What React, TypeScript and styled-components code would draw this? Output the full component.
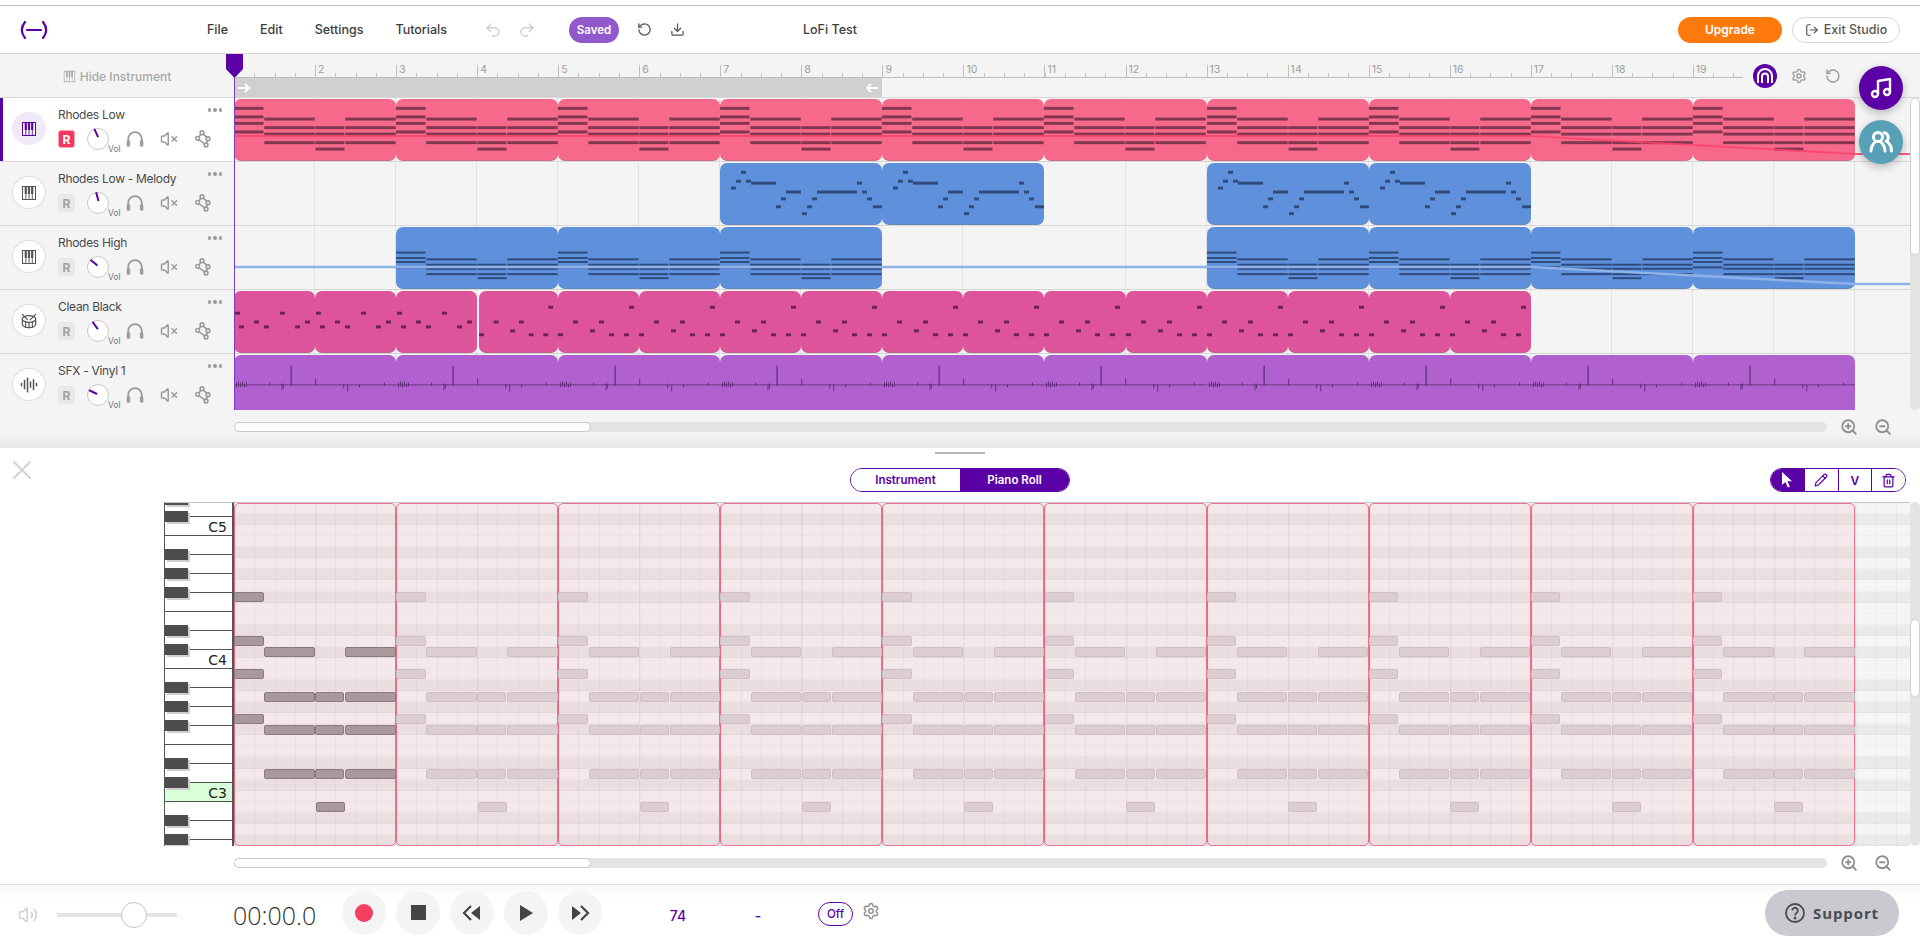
import React from 'react'
import styled, {createGlobalStyle} from 'styled-components'
import {
  AudioLines,
  Download,
  Drum,
  LogOut,
  Music,
  Pencil,
  Redo2,
  RotateCcw,
  Settings,
  Trash2,
  Undo2,
  Volume2,
  VolumeX,
  X,
  ZoomIn,
  ZoomOut,
} from 'lucide-react'

const PURPLE = '#5a00a6'
const BAR = 162.1
const UI_FONT = `Inter, "Noto Sans", sans-serif`

const GlobalStyle = createGlobalStyle`
  html, body {
    margin: 0;
    height: 100%;
    background: #fff;
    overflow: hidden;
  }
  body {
    font-family: ${UI_FONT};
    color: #444;
  }
`

const Page = styled.div`
  width: 1920px;
  height: 940px;
  padding-top: 5px;
  box-sizing: border-box;
  display: flex;
  flex-direction: column;
  overflow: hidden;
`

/* header */
const Header = styled.header`
  flex: none;
  height: 49px;
  box-sizing: border-box;
  border-top: 1px solid #bdbdbd;
  border-bottom: 1px solid #d8d8d8;
  display: flex;
  align-items: center;
  padding: 0 20px;
`

const Logo = styled.svg`
  flex: none;
  width: 28px;
  height: 20px;
  margin-right: 159px;
`

const Menu = styled.nav`
  display: flex;
  gap: 32px;
  font-size: 12.5px;
  font-weight: 500;
  color: #3c3c3c;
`

const HeaderIcons = styled.div`
  display: flex;
  gap: 16px;
  margin-left: 37px;
  color: #cfcfcf;
`

const SavedPill = styled.div`
  width: 50px;
  height: 26px;
  margin-left: 33px;
  border-radius: 13px;
  background: #9058cb;
  color: #fff;
  font-size: 11.5px;
  font-weight: 600;
  display: flex;
  align-items: center;
  justify-content: center;
`

const HeaderActions = styled.div`
  display: flex;
  gap: 18px;
  margin-left: 18px;
  color: #555;
`

const SongTitle = styled.div`
  margin-left: 118px;
  font-size: 12.5px;
  font-weight: 500;
  color: #3c3c3c;
`

const UpgradeButton = styled.div`
  margin-left: auto;
  width: 104px;
  height: 26px;
  border-radius: 13px;
  background: #ff7a0c;
  color: #fff;
  font-size: 12px;
  font-weight: 600;
  display: flex;
  align-items: center;
  justify-content: center;
`

const ExitButton = styled.div`
  width: 108px;
  height: 26px;
  margin-left: 10px;
  box-sizing: border-box;
  border-radius: 13px;
  border: 1px solid #d8d8d8;
  color: #555;
  font-size: 12.5px;
  font-weight: 500;
  display: flex;
  align-items: center;
  justify-content: center;
  gap: 5px;
`

/* arrangement */
const Arrangement = styled.section`
  position: relative;
  flex: none;
  height: 394px;
  background: linear-gradient(to bottom, #f4f4f4 calc(100% - 16px), #e9e9e9 100%);
`

const TimelineRow = styled.div`
  height: 44px;
  box-sizing: border-box;
  border-bottom: 1px solid #d8d8d8;
  display: flex;
`

const HideInstrument = styled.div`
  flex: none;
  width: 234px;
  display: flex;
  align-items: center;
  justify-content: center;
  gap: 4px;
  padding-top: 2px;
  box-sizing: border-box;
  color: #a8a8a8;
  font-size: 12px;
  font-weight: 500;
`

const TimelineColumn = styled.div`
  flex: none;
  width: 1509px;
`

const Ruler = styled.div`
  height: 24px;
  box-sizing: border-box;
  display: flex;
  overflow: hidden;
  align-items: flex-end;
  border-bottom: 1px solid #bcbcbc;
  background: repeating-linear-gradient(
      to right,
      #c4c4c4 0 1px,
      transparent 1px ${BAR / 8}px
    )
    left bottom / 100% 4px no-repeat;
`

const RulerCell = styled.div`
  flex: none;
  width: ${BAR / 2}px;
  height: 12px;
  box-sizing: border-box;
  border-left: 1px solid #c0c0c0;
  padding-left: 2px;
  font-size: 10.5px;
  line-height: 10px;
  color: #9c9c9c;
`

const LoopBar = styled.div`
  width: ${BAR * 4}px;
  height: 19px;
  background: #d0d0d0;
  color: #fff;
  display: flex;
  align-items: center;
  justify-content: space-between;
  padding: 0 3px;
  box-sizing: border-box;
`

const TimelineTools = styled.div`
  display: flex;
  align-items: center;
  gap: 10px;
  margin-left: 10px;
  color: #9a9a9a;
`

const ArchBadge = styled.div`
  width: 24px;
  height: 24px;
  border-radius: 50%;
  background: ${PURPLE};
  display: flex;
  align-items: center;
  justify-content: center;
`

const ToolSlot = styled.div`
  width: 24px;
  display: flex;
  justify-content: center;
`

const TrackViewport = styled.div`
  display: flex;
  height: 312px;
`

const TrackList = styled.div`
  flex: none;
  width: 1910px;
  overflow: hidden;
`

const VScrollTrack = styled.div`
  flex: none;
  width: 10px;
  background: #e4e4e4;
  border-radius: 5px;
  box-sizing: border-box;
`

const VScrollThumb = styled.div<{$height: number; $top: number}>`
  height: ${(p) => p.$height}px;
  margin-top: ${(p) => p.$top}px;
  box-sizing: border-box;
  background: #fff;
  border: 1px solid #cfcfcf;
  border-radius: 5px;
`

const TrackRow = styled.div`
  display: flex;
  height: 64px;
  box-sizing: border-box;
  border-bottom: 1px solid #d8d8d8;
`

const TrackHead = styled.div<{$active: boolean}>`
  flex: none;
  width: 234px;
  box-sizing: border-box;
  display: flex;
  padding: 0 11px 0 12px;
  background: ${(p) => (p.$active ? '#fff' : '#f4f4f4')};
  box-shadow: ${(p) => (p.$active ? `inset 3px 0 0 ${PURPLE}` : 'none')};
`

const InstrumentBadge = styled.div<{$active: boolean}>`
  flex: none;
  width: 34px;
  height: 33px;
  margin-top: 14px;
  box-sizing: border-box;
  border-radius: 50%;
  display: flex;
  align-items: center;
  justify-content: center;
  background: ${(p) => (p.$active ? '#f0e9f8' : '#fff')};
  border: 1px solid ${(p) => (p.$active ? '#f0e9f8' : '#dcdcdc')};
  color: ${(p) => (p.$active ? PURPLE : '#555')};
`

const TrackInfo = styled.div`
  flex: 1;
  min-width: 0;
  margin-left: 12px;
  padding-top: 10px;
`

const NameLine = styled.div`
  display: flex;
  justify-content: space-between;
  height: 14px;
`

const TrackName = styled.div`
  font-size: 12px;
  line-height: 14px;
  color: #4a4a4a;
  letter-spacing: -0.3px;
`

const MoreDots = styled.div`
  display: flex;
  gap: 2px;
  margin: 0 1px 0 0;
`

const Dot = styled.span`
  width: 3.5px;
  height: 3.5px;
  border-radius: 50%;
  background: #9e9e9e;
`

const Controls = styled.div`
  display: flex;
  align-items: center;
  margin-top: 8px;
  height: 18px;
  color: #9b9b9b;
`

const RecButton = styled.div<{$active: boolean}>`
  flex: none;
  width: 17px;
  height: 18px;
  box-sizing: border-box;
  border-radius: 3px;
  font-size: 12px;
  font-weight: 700;
  display: flex;
  align-items: center;
  justify-content: center;
  background: ${(p) => (p.$active ? '#f2375f' : '#e8e8e8')};
  border: ${(p) => (p.$active ? '1.5px solid #f9a5b7' : 'none')};
  color: ${(p) => (p.$active ? '#fff' : '#a3a3a3')};
`

const Knob = styled.div`
  position: relative;
  flex: none;
  width: 22px;
  height: 22px;
  margin: 0 17px 0 12px;
  box-sizing: border-box;
  border-radius: 50%;
  background: #fff;
  border: 1px solid #c9c9c9;
`

const KnobTick = styled.span`
  position: absolute;
  left: 9.5px;
  top: -1px;
  width: 1.6px;
  height: 9px;
  background: ${PURPLE};
  transform-origin: 50% 11px;
`

const VolLabel = styled.span`
  position: absolute;
  left: 20px;
  top: 15px;
  font-size: 8.5px;
  color: #777;
`

const CtrlIcon = styled.div`
  flex: none;
  width: 18px;
  margin-right: 16px;
  display: flex;
  justify-content: center;
  &:last-child {
    margin-right: 0;
  }
`

const Lane = styled.div`
  position: relative;
  flex: none;
  width: 1676px;
  display: grid;
  grid-template-columns: repeat(20, ${BAR / 2}px);
  grid-auto-rows: 62px;
  padding-top: 1px;
  box-sizing: border-box;
  background: repeating-linear-gradient(
    to right,
    transparent 0 ${BAR / 2 - 1}px,
    #e2e2e2 ${BAR / 2 - 1}px ${BAR / 2}px
  );
`

const Clip = styled.div<{$color: string; $start: number; $span: number; $gap?: boolean}>`
  grid-column: ${(p) => p.$start + 1} / span ${(p) => p.$span};
  grid-row: 1;
  position: relative;
  margin-left: ${(p) => (p.$gap ? 2 : 0)}px;
  background: ${(p) => p.$color};
  border-radius: 7px;
  border-bottom: 1px solid rgba(120, 120, 120, 0.35);
  box-sizing: border-box;
  overflow: hidden;
`

const ClipArt = styled.svg`
  display: block;
  width: 100%;
  height: 100%;
`

const Automation = styled.svg`
  position: absolute;
  left: 0;
  top: 0;
  width: 100%;
  height: 64px;
  pointer-events: none;
`

const Playhead = styled.div`
  position: absolute;
  left: 226px;
  top: 0;
  width: 17px;
  height: 24px;
  background: ${PURPLE};
  clip-path: polygon(0 0, 100% 0, 100% 62%, 50% 100%, 0 62%);
`

const PlayheadLine = styled.div`
  position: absolute;
  left: 234px;
  top: 23px;
  width: 1px;
  height: 333px;
  background: #7a3cc8;
`

const FloatButton = styled.div<{$color: string; $top: number}>`
  position: absolute;
  right: 17px;
  top: ${(p) => p.$top}px;
  width: 44px;
  height: 44px;
  border-radius: 50%;
  background: ${(p) => p.$color};
  color: #fff;
  display: flex;
  align-items: center;
  justify-content: center;
  box-shadow: 0 3px 8px rgba(0, 0, 0, 0.25);
`

const ScrollRow = styled.div<{$top: number}>`
  display: flex;
  align-items: center;
  height: 10px;
  margin-top: ${(p) => p.$top}px;
  padding-left: 234px;
  color: #8e8e8e;
`

const HScrollTrack = styled.div`
  flex: none;
  width: 1593px;
  height: 10px;
  margin-right: 13px;
  border-radius: 5px;
  background: #e4e4e4;
`

const HScrollThumb = styled.div`
  width: 357px;
  height: 10px;
  box-sizing: border-box;
  background: #fff;
  border: 1px solid #c8c8c8;
  border-radius: 5px;
`

const ZoomSlot = styled.div`
  width: 18px;
  margin-right: 16px;
  display: flex;
`

/* editor */
const Editor = styled.section`
  flex: none;
  height: 437px;
  box-sizing: border-box;
  border-bottom: 1px solid #dcdcdc;
  background: #fff;
`

const Handle = styled.div`
  width: 50px;
  height: 2px;
  margin: 4px auto 0;
  background: #b5b5b5;
`

const EditorHead = styled.div`
  display: grid;
  grid-template-columns: 1fr auto 1fr;
  align-items: center;
  height: 24px;
  margin-top: 14px;
  padding: 0 14px;
`

const CloseIcon = styled(X)`
  color: #d2d2d2;
  margin: -20px 0 0 -8px;
`

const ViewToggle = styled.div`
  display: flex;
  width: 220px;
  height: 24px;
  box-sizing: border-box;
  border: 1px solid ${PURPLE};
  border-radius: 12px;
  overflow: hidden;
`

const ViewTab = styled.div<{$active: boolean}>`
  flex: 1;
  display: flex;
  align-items: center;
  justify-content: center;
  font-size: 11.5px;
  font-weight: 600;
  background: ${(p) => (p.$active ? PURPLE : '#fff')};
  color: ${(p) => (p.$active ? '#fff' : PURPLE)};
`

const ToolGroup = styled.div`
  justify-self: end;
  display: flex;
  width: 136px;
  height: 24px;
  box-sizing: border-box;
  border: 1px solid ${PURPLE};
  border-radius: 12px;
  overflow: hidden;
`

const ToolButton = styled.div<{$active?: boolean}>`
  flex: 1;
  display: flex;
  align-items: center;
  justify-content: center;
  font-size: 12px;
  font-weight: 600;
  background: ${(p) => (p.$active ? PURPLE : '#fff')};
  color: ${(p) => (p.$active ? '#fff' : PURPLE)};
  & + & {
    border-left: 1px solid ${PURPLE};
  }
`

const PianoRoll = styled.div`
  display: flex;
  height: 344px;
  margin-top: 10px;
  padding-left: 164px;
  box-sizing: border-box;
`

const Keys = styled.div`
  position: relative;
  flex: none;
  width: 70px;
  height: 344px;
  box-sizing: border-box;
  border-top: 1px solid #c4c4c4;
  border-left: 1px solid #555;
  border-right: 2px solid #555;
  overflow: hidden;
`

const WhiteKey = styled.div<{$height: number; $green?: boolean}>`
  height: ${(p) => p.$height}px;
  box-sizing: border-box;
  border-bottom: 1px solid #555;
  background: ${(p) => (p.$green ? '#d9ffd9' : '#fff')};
  display: flex;
  align-items: flex-end;
  justify-content: flex-end;
  padding: 0 5px 0 0;
  font-family: 'DejaVu Sans', sans-serif;
  font-size: 14px;
  line-height: 15px;
  color: #222;
`

const BlackKey = styled.div`
  position: absolute;
  left: 0;
  width: 23px;
  height: 11px;
  background: #4d4d4d;
  box-shadow: 2px 2px 0 #cfcfcf;
`

const Grid = styled.div`
  position: relative;
  flex: none;
  width: 1676px;
  height: 344px;
  box-sizing: border-box;
  border-top: 1px solid #c4c4c4;
  display: flex;
  flex-direction: column;
  overflow: hidden;
`

const GridRow = styled.div<{$dark: boolean}>`
  flex: 1;
  background: ${(p) => (p.$dark ? '#eaeaea' : '#f5f5f5')};
  box-shadow: inset 0 -1px 0 rgba(0, 0, 0, 0.025);
`

const GridLines = styled.div`
  position: absolute;
  inset: 0;
  background: repeating-linear-gradient(
      to right,
      rgba(0, 0, 0, 0.018) 0 2px,
      transparent 2px ${BAR / 2}px
    ),
    repeating-linear-gradient(
      to right,
      rgba(0, 0, 0, 0.04) 0 1px,
      transparent 1px ${BAR / 8}px
    );
`

const FrameLayer = styled.div`
  position: absolute;
  inset: 0;
  display: grid;
  grid-template-columns: repeat(10, ${BAR}px);
`

const Frame = styled.div`
  box-sizing: border-box;
  background: rgba(247, 105, 139, 0.095);
  border: 1px solid #f0708f;
  border-radius: 5px;
`

const NoteBlock = styled.div<{$ghost: boolean}>`
  position: absolute;
  height: 10px;
  box-sizing: border-box;
  border-radius: 2px;
  background: ${(p) => (p.$ghost ? '#dccdd1' : '#a9999d')};
  border: 1px solid ${(p) => (p.$ghost ? '#d0c0c5' : '#8a7a7f')};
`

/* transport */
const Transport = styled.footer`
  flex: 1;
  display: flex;
  align-items: center;
  padding: 0 21px 0 18px;
  background: linear-gradient(to bottom, #f7f7f7 0, #fff 14px);
`

const SpeakerIcon = styled(Volume2)`
  flex: none;
  margin-top: 4px;
  color: #d4d4d4;
`

const SliderTrack = styled.div`
  position: relative;
  flex: none;
  width: 120px;
  height: 4px;
  margin: 5px 0 0 19px;
  background: #e4e4e4;
`

const SliderThumb = styled.div`
  position: absolute;
  left: 64px;
  top: -11px;
  width: 26px;
  height: 26px;
  box-sizing: border-box;
  border-radius: 50%;
  background: #fff;
  border: 1px solid #c4c4c4;
`

const Clock = styled.div`
  flex: none;
  width: 84px;
  margin: 4px 0 0 56px;
  font-family: 'Open Sans', sans-serif;
  font-size: 25px;
  font-weight: 300;
  color: #333;
  white-space: nowrap;
`

const TransportButtons = styled.div`
  display: flex;
  gap: 10px;
  margin-left: 25px;
`

const RoundButton = styled.div`
  width: 44px;
  height: 44px;
  border-radius: 50%;
  background: #f4f4f4;
  display: flex;
  align-items: center;
  justify-content: center;
  color: #454545;
`

const RecordDot = styled.span`
  width: 18px;
  height: 18px;
  border-radius: 50%;
  background: #f43f60;
`

const StopSquare = styled.span`
  width: 15px;
  height: 15px;
  background: #454545;
`

const Readout = styled.div<{$width: number; $left: number}>`
  flex: none;
  width: ${(p) => p.$width}px;
  margin: 5px 0 0 ${(p) => p.$left}px;
  text-align: center;
  color: ${PURPLE};
  font-size: 14px;
  font-weight: 500;
`

const MetronomePill = styled.div`
  flex: none;
  width: 35px;
  height: 24px;
  margin: 3px 0 0 50px;
  box-sizing: border-box;
  border: 1px solid ${PURPLE};
  border-radius: 12px;
  color: ${PURPLE};
  font-size: 11.5px;
  font-weight: 500;
  display: flex;
  align-items: center;
  justify-content: center;
`

const MetronomeGear = styled(Settings)`
  flex: none;
  margin: -4px 0 0 9px;
  color: #909090;
`

const SupportButton = styled.div`
  flex: none;
  margin-left: auto;
  width: 134px;
  height: 46px;
  border-radius: 23px;
  background: #c9cad0;
  color: #4a4b52;
  font-family: 'Open Sans', sans-serif;
  font-size: 15px;
  font-weight: 700;
  letter-spacing: 0.9px;
  display: flex;
  align-items: center;
  justify-content: center;
  gap: 8px;
`

/* drawings */
const PianoGlyph = ({size = 16}: {size?: number}) => (
  <svg width={size} height={size} viewBox="0 0 16 16">
    <rect x="1" y="1" width="14" height="14" fill="currentColor" />
    <rect x="2" y="2" width="12" height="12" fill="#fff" />
    <rect x="3.7" y="1" width="2.2" height="8" fill="currentColor" />
    <rect x="6.9" y="1" width="2.2" height="8" fill="currentColor" />
    <rect x="10.1" y="1" width="2.2" height="8" fill="currentColor" />
    <rect x="4.4" y="9" width="0.9" height="5" fill="currentColor" />
    <rect x="7.6" y="9" width="0.9" height="5" fill="currentColor" />
    <rect x="10.8" y="9" width="0.9" height="5" fill="currentColor" />
  </svg>
)

const HeadphoneGlyph = () => (
  <svg width="18" height="18" viewBox="0 0 18 18" fill="none" stroke="currentColor">
    <path d="M2.2 13V9a6.8 6.8 0 0 1 13.6 0v4" strokeWidth="1.8" />
    <rect x="1" y="10.5" width="2.8" height="6" rx="1.2" fill="currentColor" strokeWidth="0.6" />
    <rect x="14.2" y="10.5" width="2.8" height="6" rx="1.2" fill="currentColor" strokeWidth="0.6" />
  </svg>
)

const FxGlyph = () => (
  <svg width="16" height="18" viewBox="0 0 16 18" fill="none" stroke="currentColor" strokeWidth="1.6">
    <circle cx="7" cy="2.8" r="1.9" />
    <circle cx="2.6" cy="8.4" r="1.9" />
    <circle cx="13" cy="8.8" r="1.9" />
    <circle cx="11" cy="15" r="1.9" />
    <path d="M5.9 4.4 3.7 6.9M8.3 4.2 11.9 7.4M3.9 9.8 9.6 13.7M12.4 10.6 11.5 13.2" />
  </svg>
)

const ArchGlyph = () => (
  <svg width="18" height="18" viewBox="0 0 18 18" fill="none" stroke="#fff" strokeWidth="2">
    <path d="M2 16V9a7 7 0 0 1 14 0v7" />
    <path d="M6 16V9.5a3 3 0 0 1 6 0V16" />
  </svg>
)

const PeopleGlyph = () => (
  <svg width="28" height="26" viewBox="0 0 28 26" fill="none" stroke="#fff" strokeWidth="3" strokeLinecap="round">
    <circle cx="11" cy="8" r="4.6" />
    <path d="M4 22c0-4 2-7 4.5-9.5M18 22c0-4-2-7-4.5-9.5" />
    <path d="M17.5 3.6a5 5 0 0 1 2 8.6c3 2 5 5 5 9.8" />
  </svg>
)

const SkipGlyph = ({flip}: {flip?: boolean}) => (
  <svg width="20" height="20" viewBox="0 0 20 20" style={flip ? {transform: 'scaleX(-1)'} : undefined}>
    <path d="M18 3v14L9 10z" fill="currentColor" />
    <path d="M9 3 2 10l7 7" fill="none" stroke="currentColor" strokeWidth="2.2" />
  </svg>
)

const Cursor = () => (
  <svg width="14" height="16" viewBox="0 0 14 16">
    <path d="M2 0v13l3.4-3 2.4 5.6 2-1-2.4-5.4H12z" fill="currentColor" />
  </svg>
)

const HelpGlyph = () => (
  <svg width="20" height="20" viewBox="0 0 20 20" fill="none" stroke="currentColor" strokeWidth="1.8">
    <circle cx="10" cy="10" r="9" />
    <path d="M7.2 7.6a2.8 2.8 0 1 1 4.4 2.3c-1 .7-1.6 1.2-1.6 2.5" />
    <circle cx="10" cy="15" r=".6" fill="currentColor" />
  </svg>
)

/* data */
const NOTES: {r: number; x: number; w: number}[] = [
  {r: 8, x: 0, w: 29.5},
  {r: 12, x: 0, w: 29.5},
  {r: 13, x: 30.3, w: 50.4},
  {r: 13, x: 111.3, w: 50.4},
  {r: 15, x: 0, w: 29.5},
  {r: 17, x: 30.3, w: 50.4},
  {r: 17, x: 81.3, w: 29},
  {r: 17, x: 111.3, w: 50.4},
  {r: 19, x: 0, w: 29.5},
  {r: 20, x: 30.3, w: 50.4},
  {r: 20, x: 81.3, w: 29},
  {r: 20, x: 111.3, w: 50.4},
  {r: 24, x: 30.3, w: 50.4},
  {r: 24, x: 81.3, w: 29},
  {r: 24, x: 111.3, w: 50.4},
  {r: 27, x: 81.5, w: 29},
]

const MELODY: [number, number, number][] = [
  [21, 26, 9],
  [16, 21, 18],
  [26, 31, 18],
  [11, 16, 25],
  [31, 56, 20],
  [66, 81, 29],
  [97, 137, 29],
  [137, 142, 20],
  [142, 147, 29],
  [61, 66, 36],
  [92, 97, 36],
  [147, 152, 36],
  [56, 61, 44],
  [87, 92, 44],
  [153, 163, 44],
  [82, 87, 51],
]

const DRUM_A: [number, number][] = [
  [1, 21],
  [46, 21],
  [20, 30],
  [71, 30],
  [5, 35],
  [30, 35],
  [61, 35],
]

const DRUM_B: [number, number][] = [
  [0, 43],
  [51, 43],
  [66, 43],
  [71, 15],
  [15, 30],
  [41, 30],
  [32, 39],
]

const SPIKES: [number, number, number][] = [
  [2, 2, 2], [4, 3, 1], [6, 2, 2], [8, 3, 1], [10, 1, 2], [12, 2, 1],
  [35, 2, 0], [47.5, 1, 5], [49, 1, 3], [56.5, 19, 0], [81.3, 6, 0],
  [109.3, 1, 3], [113.3, 0, 6], [125, 0, 2], [150, 2, 0],
]

const noteTop = (r: number, top: number, step: number) => top + (r - 8) * step

const ClipNotes = ({top, step, thick, color}: {top: number; step: number; thick: number; color: string}) => (
  <ClipArt viewBox={`0 0 ${BAR} 62`} preserveAspectRatio="none">
    {NOTES.map((n, i) => (
      <rect key={i} x={n.x} y={noteTop(n.r, top, step)} width={n.w} height={thick} fill={color} />
    ))}
  </ClipArt>
)

const MelodyNotes = () => (
  <ClipArt viewBox={`0 0 ${BAR} 62`} preserveAspectRatio="none">
    {MELODY.map(([a, b, y], i) => (
      <rect key={i} x={a} y={y - 1} width={b - a} height={3} fill="#2f4b7c" />
    ))}
  </ClipArt>
)

const DrumNotes = ({notes}: {notes: [number, number][]}) => (
  <ClipArt viewBox={`0 0 ${BAR / 2} 62`} preserveAspectRatio="none">
    {notes.map(([x, y], i) => (
      <rect key={i} x={x} y={y} width={5} height={3} fill="#6d2352" />
    ))}
  </ClipArt>
)

const WaveClip = () => (
  <ClipArt viewBox={`0 0 ${BAR} 62`} preserveAspectRatio="none">
    <rect x="0" y="30" width={BAR} height="0.8" fill="#5c2a74" />
    {SPIKES.map(([x, up, down], i) => (
      <rect key={i} x={x} y={30 - up} width={x > 56 && x < 57 ? 1.2 : 0.9} height={up + down + 1} fill="#5c2a74" />
    ))}
  </ClipArt>
)

const bars = (from: number, count: number) => Array.from({length: count}, (_, i) => from + i)

const TRACKS = [
  {name: 'Rhodes Low', icon: 'piano', angle: -25, active: true},
  {name: 'Rhodes Low - Melody', icon: 'piano', angle: -15, active: false},
  {name: 'Rhodes High', icon: 'piano', angle: -50, active: false},
  {name: 'Clean Black', icon: 'drum', angle: -35, active: false},
  {name: 'SFX - Vinyl 1', icon: 'audio', angle: -65, active: false},
]

const LaneClips = ({index}: {index: number}) => {
  if (index === 0) {
    return (
      <>
        {bars(0, 10).map((b) => (
          <Clip key={b} $color="#f7698b" $start={b * 2} $span={2}>
            <ClipNotes top={8} step={2.18} thick={3} color="#82364f" />
          </Clip>
        ))}
        <Automation viewBox="0 0 1676 64">
          <path d="M0 38H1296L1621 56H1676" fill="none" stroke="#f9436c" strokeWidth="2" opacity="0.85" />
        </Automation>
      </>
    )
  }
  if (index === 1) {
    return (
      <>
        {[3, 4, 6, 7].map((b) => (
          <Clip key={b} $color="#5e90dc" $start={b * 2} $span={2}>
            <MelodyNotes />
          </Clip>
        ))}
      </>
    )
  }
  if (index === 2) {
    return (
      <>
        {[1, 2, 3, 6, 7, 8, 9].map((b) => (
          <Clip key={b} $color="#5e90dc" $start={b * 2} $span={2}>
            <ClipNotes top={25} step={1.37} thick={2} color="#2f4b7c" />
          </Clip>
        ))}
        <Automation viewBox="0 0 1676 64">
          <path d="M0 41H1296L1621 58H1676" fill="none" stroke="#8fb2e8" strokeWidth="2.5" />
        </Automation>
      </>
    )
  }
  if (index === 3) {
    return (
      <>
        {bars(0, 16).map((b) => (
          <Clip key={b} $color="#dd549b" $start={b} $span={1} $gap={b === 3}>
            <DrumNotes notes={b < 3 ? DRUM_A : DRUM_B} />
          </Clip>
        ))}
      </>
    )
  }
  return (
    <>
      {bars(0, 10).map((b) => (
        <Clip key={b} $color="#b160cf" $start={b * 2} $span={2}>
          <WaveClip />
        </Clip>
      ))}
    </>
  )
}

// semitone pattern from the top of the roll, first row sits just above C5
const DARK_ROWS = new Set([1, 4, 6, 8, 11])
const GRID_ROWS = Array.from({length: 31}, (_, i) => DARK_ROWS.has(i % 12))

const BLACK_KEYS = [-9, 8, 46, 65, 84, 122, 141, 179, 198, 217, 255, 274, 312, 331]

const WHITE_KEYS: {h: number; label?: string; green?: boolean}[] = [
  {h: 14},
  {h: 19, label: 'C5'},
  ...bars(0, 6).map(() => ({h: 19})),
  {h: 19, label: 'C4'},
  ...bars(0, 6).map(() => ({h: 19})),
  {h: 19, label: 'C3', green: true},
  {h: 19},
  {h: 19},
]

const RULER_LABELS = ['', ...bars(2, 18).map(String)]

const App = () => (
  <Page>
    <GlobalStyle />
    <Header>
      <Logo viewBox="0 0 28 20" fill="none" stroke={PURPLE} strokeWidth="2.2" strokeLinecap="round">
        <path d="M5 2C1 7 1 13 5 18M23 2c4 5 4 11 0 16M7 10h14" />
      </Logo>
      <Menu>
        <span>File</span>
        <span>Edit</span>
        <span>Settings</span>
        <span>Tutorials</span>
      </Menu>
      <HeaderIcons>
        <Undo2 size={18} />
        <Redo2 size={18} />
      </HeaderIcons>
      <SavedPill>Saved</SavedPill>
      <HeaderActions>
        <RotateCcw size={15} />
        <Download size={15} />
      </HeaderActions>
      <SongTitle>LoFi Test</SongTitle>
      <UpgradeButton>Upgrade</UpgradeButton>
      <ExitButton>
        <LogOut size={14} />
        Exit Studio
      </ExitButton>
    </Header>

    <Arrangement>
      <TimelineRow>
        <HideInstrument>
          <PianoGlyph size={13} />
          Hide Instrument
        </HideInstrument>
        <TimelineColumn>
          <Ruler>
            {RULER_LABELS.map((label, i) => (
              <RulerCell key={i}>{label}</RulerCell>
            ))}
          </Ruler>
          <LoopBar>
            <svg width="14" height="12" viewBox="0 0 14 12" fill="none" stroke="#fff" strokeWidth="2">
              <path d="M1 6h11M8 2l4 4-4 4" />
            </svg>
            <svg width="14" height="12" viewBox="0 0 14 12" fill="none" stroke="#fff" strokeWidth="2">
              <path d="M13 6H2M6 2 2 6l4 4" />
            </svg>
          </LoopBar>
        </TimelineColumn>
        <TimelineTools>
          <ArchBadge>
            <ArchGlyph />
          </ArchBadge>
          <ToolSlot>
            <Settings size={16} />
          </ToolSlot>
          <ToolSlot>
            <RotateCcw size={16} />
          </ToolSlot>
        </TimelineTools>
      </TimelineRow>

      <TrackViewport>
        <TrackList>
          {TRACKS.map((t, i) => (
            <TrackRow key={t.name}>
              <TrackHead $active={t.active}>
                <InstrumentBadge $active={t.active}>
                  {t.icon === 'piano' && <PianoGlyph />}
                  {t.icon === 'drum' && <Drum size={16} strokeWidth={1.8} />}
                  {t.icon === 'audio' && <AudioLines size={18} />}
                </InstrumentBadge>
                <TrackInfo>
                  <NameLine>
                    <TrackName>{t.name}</TrackName>
                    <MoreDots>
                      <Dot />
                      <Dot />
                      <Dot />
                    </MoreDots>
                  </NameLine>
                  <Controls>
                    <RecButton $active={t.active}>R</RecButton>
                    <Knob>
                      <KnobTick style={{transform: `rotate(${t.angle}deg)`}} />
                      <VolLabel>Vol</VolLabel>
                    </Knob>
                    <CtrlIcon>
                      <HeadphoneGlyph />
                    </CtrlIcon>
                    <CtrlIcon>
                      <VolumeX size={18} />
                    </CtrlIcon>
                    <CtrlIcon>
                      <FxGlyph />
                    </CtrlIcon>
                  </Controls>
                </TrackInfo>
              </TrackHead>
              <Lane>
                <LaneClips index={i} />
              </Lane>
            </TrackRow>
          ))}
        </TrackList>
        <VScrollTrack>
          <VScrollThumb $height={157} $top={0} />
        </VScrollTrack>
      </TrackViewport>

      <ScrollRow $top={12}>
        <HScrollTrack>
          <HScrollThumb />
        </HScrollTrack>
        <ZoomSlot>
          <ZoomIn size={18} strokeWidth={2.4} />
        </ZoomSlot>
        <ZoomSlot>
          <ZoomOut size={18} strokeWidth={2.4} />
        </ZoomSlot>
      </ScrollRow>

      <Playhead />
      <PlayheadLine />
      <FloatButton $color={PURPLE} $top={12}>
        <Music size={24} strokeWidth={2.4} />
      </FloatButton>
      <FloatButton $color="#57a0b6" $top={66}>
        <PeopleGlyph />
      </FloatButton>
    </Arrangement>

    <Editor>
      <Handle />
      <EditorHead>
        <CloseIcon size={32} strokeWidth={1.5} />
        <ViewToggle>
          <ViewTab $active={false}>Instrument</ViewTab>
          <ViewTab $active>Piano Roll</ViewTab>
        </ViewToggle>
        <ToolGroup>
          <ToolButton $active>
            <Cursor />
          </ToolButton>
          <ToolButton>
            <Pencil size={14} />
          </ToolButton>
          <ToolButton>V</ToolButton>
          <ToolButton>
            <Trash2 size={15} />
          </ToolButton>
        </ToolGroup>
      </EditorHead>

      <PianoRoll>
        <Keys>
          {WHITE_KEYS.map((k, i) => (
            <WhiteKey key={i} $height={k.h} $green={k.green}>
              {k.label}
            </WhiteKey>
          ))}
          {BLACK_KEYS.map((top) => (
            <BlackKey key={top} style={{top}} />
          ))}
        </Keys>
        <Grid>
          {GRID_ROWS.map((dark, i) => (
            <GridRow key={i} $dark={dark} />
          ))}
          <FrameLayer>
            {bars(0, 10).map((b) => (
              <Frame key={b} />
            ))}
          </FrameLayer>
          <GridLines />
          {bars(0, 10).map((b) =>
            NOTES.map((n, i) => (
              <NoteBlock
                key={`${b}-${i}`}
                $ghost={b > 0}
                style={{left: b * BAR + n.x, top: n.r * 11.065 + 0.5, width: n.w}}
              />
            )),
          )}
        </Grid>
        <VScrollTrack>
          <VScrollThumb $height={78} $top={117} />
        </VScrollTrack>
      </PianoRoll>

      <ScrollRow $top={12}>
        <HScrollTrack>
          <HScrollThumb />
        </HScrollTrack>
        <ZoomSlot>
          <ZoomIn size={18} strokeWidth={2.4} />
        </ZoomSlot>
        <ZoomSlot>
          <ZoomOut size={18} strokeWidth={2.4} />
        </ZoomSlot>
      </ScrollRow>
    </Editor>

    <Transport>
      <SpeakerIcon size={20} />
      <SliderTrack>
        <SliderThumb />
      </SliderTrack>
      <Clock>00:00.0</Clock>
      <TransportButtons>
        <RoundButton>
          <RecordDot />
        </RoundButton>
        <RoundButton>
          <StopSquare />
        </RoundButton>
        <RoundButton>
          <SkipGlyph />
        </RoundButton>
        <RoundButton>
          <svg width="16" height="18" viewBox="0 0 16 18">
            <path d="M2 1v16l13-8z" fill="currentColor" />
          </svg>
        </RoundButton>
        <RoundButton>
          <SkipGlyph flip />
        </RoundButton>
      </TransportButtons>
      <Readout $width={40} $left={56}>
        74
      </Readout>
      <Readout $width={20} $left={50}>
        -
      </Readout>
      <MetronomePill>Off</MetronomePill>
      <MetronomeGear size={18} />
      <SupportButton>
        <HelpGlyph />
        Support
      </SupportButton>
    </Transport>
  </Page>
)

export default App
